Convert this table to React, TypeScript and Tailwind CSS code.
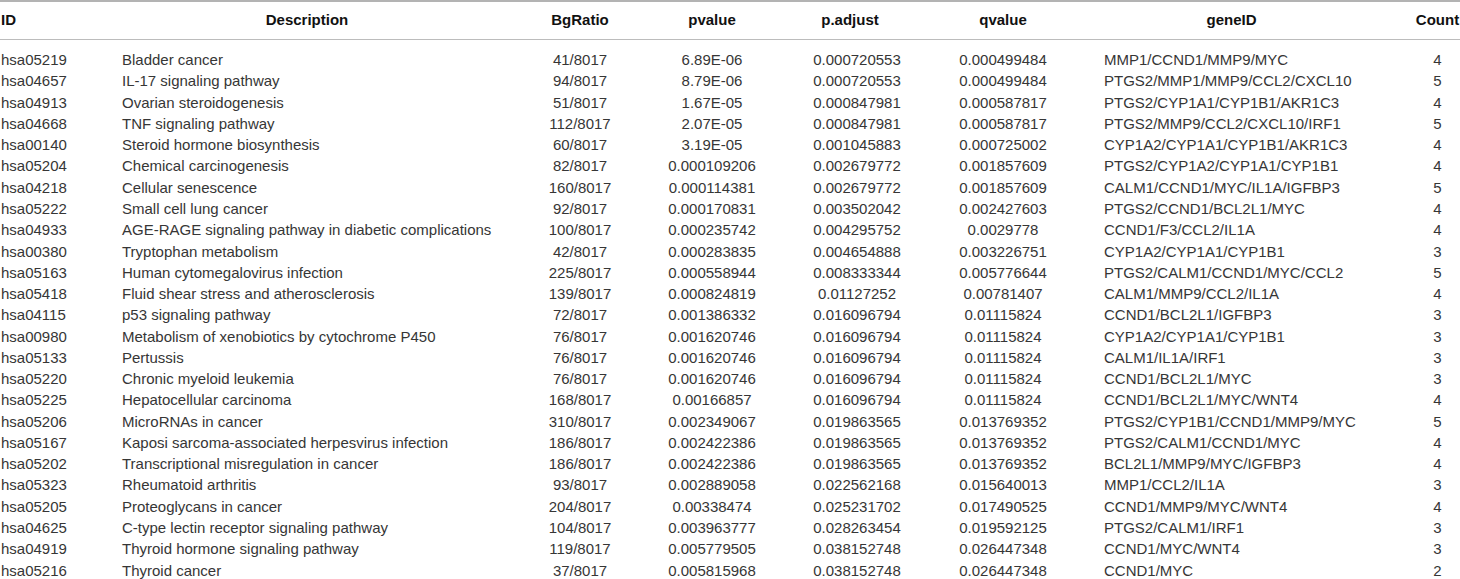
import React from "react";

const rows: string[][] = [
  ["hsa05219", "Bladder cancer", "41/8017", "6.89E-06", "0.000720553", "0.000499484", "MMP1/CCND1/MMP9/MYC", "4"],
  ["hsa04657", "IL-17 signaling pathway", "94/8017", "8.79E-06", "0.000720553", "0.000499484", "PTGS2/MMP1/MMP9/CCL2/CXCL10", "5"],
  ["hsa04913", "Ovarian steroidogenesis", "51/8017", "1.67E-05", "0.000847981", "0.000587817", "PTGS2/CYP1A1/CYP1B1/AKR1C3", "4"],
  ["hsa04668", "TNF signaling pathway", "112/8017", "2.07E-05", "0.000847981", "0.000587817", "PTGS2/MMP9/CCL2/CXCL10/IRF1", "5"],
  ["hsa00140", "Steroid hormone biosynthesis", "60/8017", "3.19E-05", "0.001045883", "0.000725002", "CYP1A2/CYP1A1/CYP1B1/AKR1C3", "4"],
  ["hsa05204", "Chemical carcinogenesis", "82/8017", "0.000109206", "0.002679772", "0.001857609", "PTGS2/CYP1A2/CYP1A1/CYP1B1", "4"],
  ["hsa04218", "Cellular senescence", "160/8017", "0.000114381", "0.002679772", "0.001857609", "CALM1/CCND1/MYC/IL1A/IGFBP3", "5"],
  ["hsa05222", "Small cell lung cancer", "92/8017", "0.000170831", "0.003502042", "0.002427603", "PTGS2/CCND1/BCL2L1/MYC", "4"],
  ["hsa04933", "AGE-RAGE signaling pathway in diabetic complications", "100/8017", "0.000235742", "0.004295752", "0.0029778", "CCND1/F3/CCL2/IL1A", "4"],
  ["hsa00380", "Tryptophan metabolism", "42/8017", "0.000283835", "0.004654888", "0.003226751", "CYP1A2/CYP1A1/CYP1B1", "3"],
  ["hsa05163", "Human cytomegalovirus infection", "225/8017", "0.000558944", "0.008333344", "0.005776644", "PTGS2/CALM1/CCND1/MYC/CCL2", "5"],
  ["hsa05418", "Fluid shear stress and atherosclerosis", "139/8017", "0.000824819", "0.01127252", "0.00781407", "CALM1/MMP9/CCL2/IL1A", "4"],
  ["hsa04115", "p53 signaling pathway", "72/8017", "0.001386332", "0.016096794", "0.01115824", "CCND1/BCL2L1/IGFBP3", "3"],
  ["hsa00980", "Metabolism of xenobiotics by cytochrome P450", "76/8017", "0.001620746", "0.016096794", "0.01115824", "CYP1A2/CYP1A1/CYP1B1", "3"],
  ["hsa05133", "Pertussis", "76/8017", "0.001620746", "0.016096794", "0.01115824", "CALM1/IL1A/IRF1", "3"],
  ["hsa05220", "Chronic myeloid leukemia", "76/8017", "0.001620746", "0.016096794", "0.01115824", "CCND1/BCL2L1/MYC", "3"],
  ["hsa05225", "Hepatocellular carcinoma", "168/8017", "0.00166857", "0.016096794", "0.01115824", "CCND1/BCL2L1/MYC/WNT4", "4"],
  ["hsa05206", "MicroRNAs in cancer", "310/8017", "0.002349067", "0.019863565", "0.013769352", "PTGS2/CYP1B1/CCND1/MMP9/MYC", "5"],
  ["hsa05167", "Kaposi sarcoma-associated herpesvirus infection", "186/8017", "0.002422386", "0.019863565", "0.013769352", "PTGS2/CALM1/CCND1/MYC", "4"],
  ["hsa05202", "Transcriptional misregulation in cancer", "186/8017", "0.002422386", "0.019863565", "0.013769352", "BCL2L1/MMP9/MYC/IGFBP3", "4"],
  ["hsa05323", "Rheumatoid arthritis", "93/8017", "0.002889058", "0.022562168", "0.015640013", "MMP1/CCL2/IL1A", "3"],
  ["hsa05205", "Proteoglycans in cancer", "204/8017", "0.00338474", "0.025231702", "0.017490525", "CCND1/MMP9/MYC/WNT4", "4"],
  ["hsa04625", "C-type lectin receptor signaling pathway", "104/8017", "0.003963777", "0.028263454", "0.019592125", "PTGS2/CALM1/IRF1", "3"],
  ["hsa04919", "Thyroid hormone signaling pathway", "119/8017", "0.005779505", "0.038152748", "0.026447348", "CCND1/MYC/WNT4", "3"],
  ["hsa05216", "Thyroid cancer", "37/8017", "0.005815968", "0.038152748", "0.026447348", "CCND1/MYC", "2"],
];

const grid = "grid grid-cols-[122px_370px_176px_88px_202px_90px_367px_45px]";

export default function App() {
  return (
    <div
      className="w-[1460px] h-[579px] overflow-hidden bg-white text-[15px] text-[#363636]"
      style={{ fontFamily: '"Liberation Sans", Arial, sans-serif' }}
    >
      <div className="border-t-2 border-[#b3b3b3]">
        <div className={`${grid} h-[38px] items-center border-b border-[#bcbcbc] font-bold text-[#111]`}>
          <div className="pl-[1px] whitespace-nowrap">ID</div>
          <div className="flex justify-center whitespace-nowrap">Description</div>
          <div className="flex justify-center whitespace-nowrap">BgRatio</div>
          <div className="flex justify-center whitespace-nowrap">pvalue</div>
          <div className="flex justify-center whitespace-nowrap pr-[14px]">p.adjust</div>
          <div className="flex justify-center whitespace-nowrap">qvalue</div>
          <div className="flex justify-center whitespace-nowrap">geneID</div>
          <div className="flex justify-center whitespace-nowrap">Count</div>
        </div>
        <div className="pt-[9px]">
          {rows.map((r) => (
            <div key={r[0]} className={`${grid} h-[21.27px] items-center leading-[21px]`}>
              <div className="pl-[1px] whitespace-nowrap">{r[0]}</div>
              <div className="whitespace-nowrap">{r[1]}</div>
              <div className="flex justify-center whitespace-nowrap">{r[2]}</div>
              <div className="flex justify-center whitespace-nowrap">{r[3]}</div>
              <div className="flex justify-center whitespace-nowrap">{r[4]}</div>
              <div className="flex justify-center whitespace-nowrap">{r[5]}</div>
              <div className="pl-[56px] whitespace-nowrap">{r[6]}</div>
              <div className="flex justify-center whitespace-nowrap">{r[7]}</div>
            </div>
          ))}
        </div>
      </div>
    </div>
  );
}
